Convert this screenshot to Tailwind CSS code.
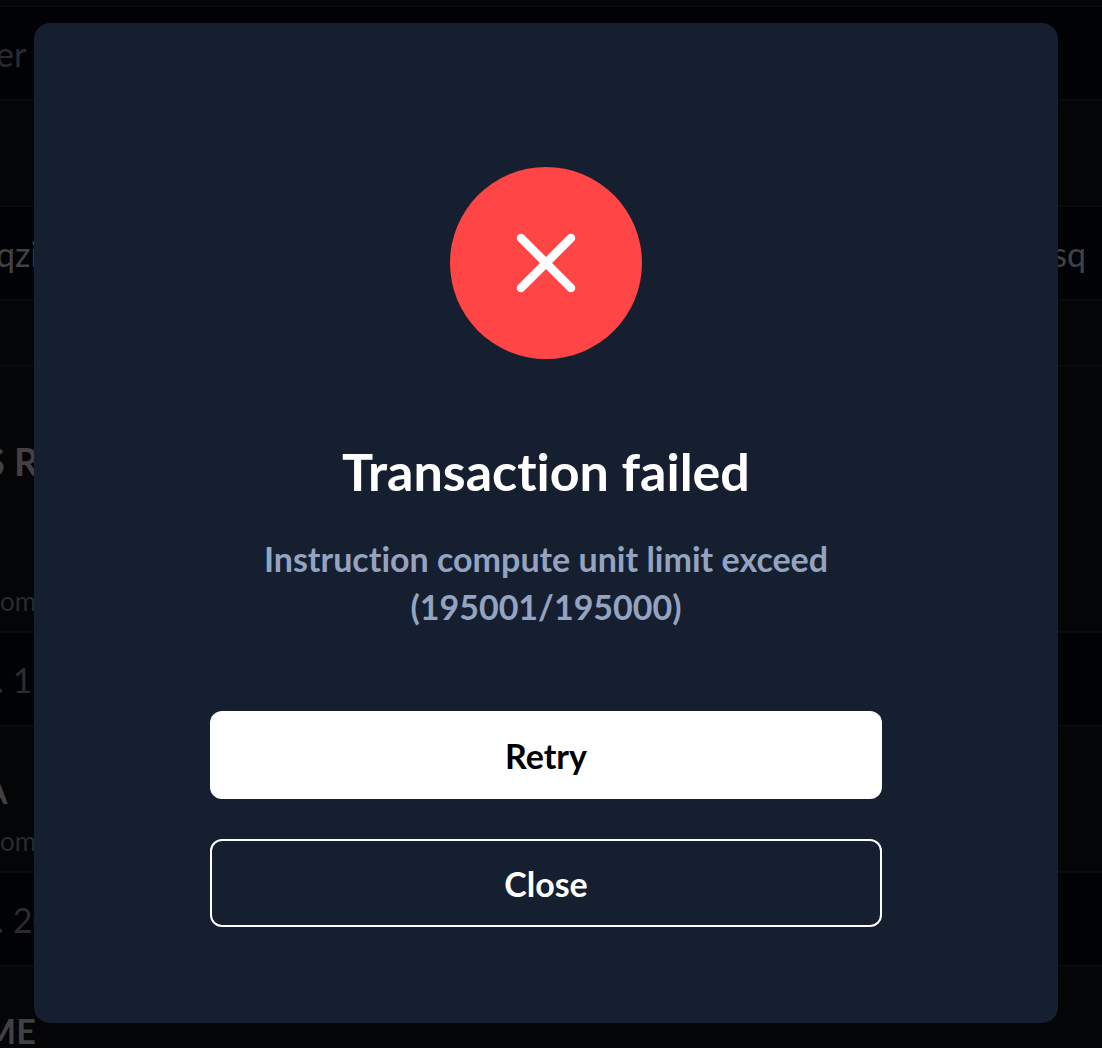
<!DOCTYPE html>
<html lang="en">
<head>
    <meta charset="UTF-8">
    <meta name="viewport" content="width=device-width, initial-scale=1.0">
    <title>Transaction failed</title>
    <script src="https://cdn.jsdelivr.net/npm/@tailwindcss/browser@4"></script>
</head>
<body class="h-screen overflow-hidden bg-[#040507] font-['Lato',sans-serif] [font-variant-ligatures:none]">
    <!-- dimmed page behind the dialog -->
    <main class="h-screen overflow-hidden text-[#2b2b2d]" aria-hidden="true">
        <div class="h-[7px] border-b-2 border-[#0a0b0d]"></div>
        <div class="flex h-[94px] items-center border-b-2 border-[#0a0b0d] bg-[#010206] text-[34px]"><span class="-ml-1 whitespace-nowrap">er S</span></div>
        <div class="h-[106px] border-b-2 border-[#0a0b0d]"></div>
        <div class="flex h-[94px] items-center justify-between border-b-2 border-[#0a0b0d] bg-[#010206] pr-4 text-[34px] text-[#414143]">
            <span class="-ml-1">qzi</span>
            <span>sq</span>
        </div>
        <div class="h-[66px] border-b-2 border-[#0a0b0d]"></div>
        <div class="flex h-[266px] flex-col justify-between border-b-2 border-[#0a0b0d] pt-[70px] pb-3">
            <h2 class="-ml-4 text-[38px] leading-12 font-bold whitespace-nowrap text-[#414143]">S R</h2>
            <p class="text-[26px] leading-9">om</p>
        </div>
        <div class="flex h-[94px] items-center border-b-2 border-[#0a0b0d] bg-[#010206] text-[34px]"><span class="-ml-1 whitespace-nowrap">. 11</span></div>
        <div class="flex h-[146px] flex-col justify-end border-b-2 border-[#0a0b0d] pb-3">
            <h2 class="-ml-4 text-[34px] leading-12 font-bold text-[#414143]">A</h2>
            <p class="mt-2 text-[26px] leading-9">om</p>
        </div>
        <div class="flex h-[94px] items-center border-b-2 border-[#0a0b0d] bg-[#010206] text-[34px]"><span class="-ml-1 whitespace-nowrap">. 20</span></div>
        <h2 class="-ml-4 pt-10 text-[34px] leading-12 font-bold text-[#414143]">ME</h2>
    </main>

    <div class="fixed inset-0 flex items-start pt-[23px] pr-11 pl-[34px]">
        <div role="dialog" aria-modal="true" aria-labelledby="dialog-title" class="flex w-full flex-col items-center rounded-2xl bg-[#161f2f] px-44 pt-36 pb-24 text-center">
            <svg class="size-48" viewBox="0 0 192 192" fill="none" aria-hidden="true">
                <circle cx="96" cy="96" r="96" fill="#ff4546"/>
                <path d="M71 71L121 121M121 71L71 121" stroke="#fff" stroke-width="8.5" stroke-linecap="round"/>
            </svg>
            <h1 id="dialog-title" class="mt-20 text-[52px] leading-16 font-bold text-white">Transaction failed</h1>
            <p class="mt-8 text-[34px] leading-12 font-bold text-[#94a3c0]">Instruction compute unit limit exceed (195001/195000)</p>
            <div class="mt-20 flex w-full flex-col gap-10">
                <button type="button" class="h-22 rounded-xl bg-white text-[34px] font-bold text-black">Retry</button>
                <button type="button" class="h-22 rounded-xl border-2 border-white text-[34px] font-bold text-white">Close</button>
            </div>
        </div>
    </div>
</body>
</html>
